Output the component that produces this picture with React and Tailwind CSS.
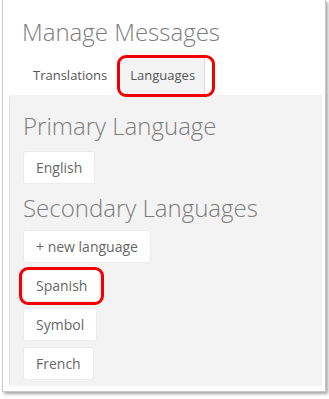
function LangButton({ label, marked }) {
    return (
        <div className="relative self-start">
            <button className="h-[33px] px-[12px] bg-white rounded-[3px] border border-[#ececec] text-[14px] text-[#666]">
                {label}
            </button>
            {marked && (
                <div className="absolute left-[-4px] right-[-4px] top-[-2px] bottom-[-3px] border-[3px] border-[#f00000] rounded-[9px]" />
            )}
        </div>
    )
}

export default function App() {
    const secondary = ['Spanish', 'Symbol', 'French']

    return (
        <div className="w-[329px] h-[399px] bg-white pl-[2px]" style={{ fontFamily: '"Open Sans", sans-serif' }}>
            <div className="w-[324px] h-[392px] border border-t-0 border-[#c8c8c8] shadow-[2px_2px_3px_rgba(0,0,0,0.35)] pl-[6px] pr-[3px] pb-[5px] flex flex-col">
                <h1 className="mt-[18px] ml-[13px] text-[24px] leading-[27px] font-light text-[#7d7d7d]">
                    Manage Messages
                </h1>

                <div className="flex mt-[11px] ml-[13px] h-[39px]">
                    <div className="px-[11px] flex items-center text-[13px] text-[#555]">Translations</div>
                    <div className="relative ml-[3px] px-[9px] flex items-center text-[13px] text-[#555] bg-[#f3f3f3] border-r border-[#dcdcdc]">
                        Languages
                        <div className="absolute left-[-4px] right-[-11px] top-[-1px] bottom-[-2px] border-[3px] border-[#f00000] rounded-[9px]" />
                    </div>
                </div>

                <div className="flex-1 bg-[#f3f3f3] rounded-tl-[4px] border-l border-[#e2e2e2] pl-[13px] pt-[18px] flex flex-col">
                    <h2 className="text-[24px] leading-[26px] font-light text-[#7d7d7d]">Primary Language</h2>
                    <div className="mt-[12px] flex flex-col">
                        <LangButton label="English" />
                    </div>
                    <h2 className="mt-[11px] text-[24px] leading-[26px] font-light text-[#7d7d7d]">Secondary Languages</h2>
                    <div className="mt-[9px] flex flex-col gap-[6px]">
                        <LangButton label="+ new language" />
                        {secondary.map((lang) => (
                            <LangButton key={lang} label={lang} marked={lang === 'Spanish'} />
                        ))}
                    </div>
                </div>
            </div>
        </div>
    )
}
